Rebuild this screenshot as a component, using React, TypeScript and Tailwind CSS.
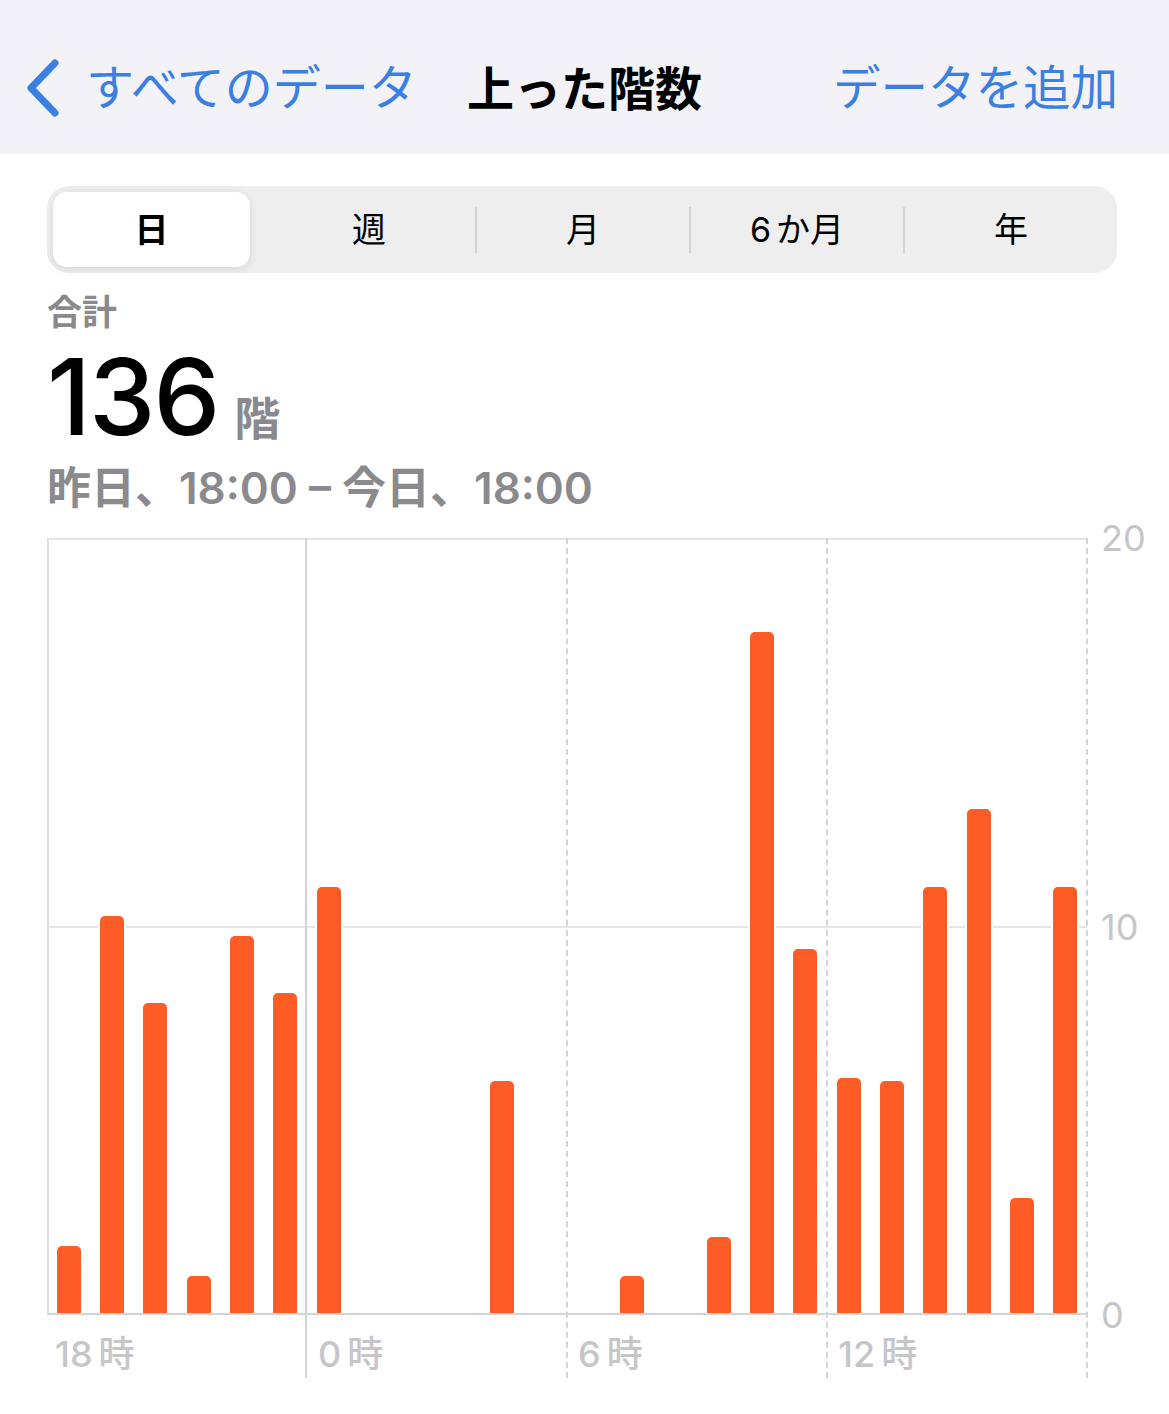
const hours = [67, 397, 310, 37, 377, 320, 426, 0, 0, 0, 232, 0, 0, 37, 0, 76, 681, 364, 235, 232, 426, 504, 115, 426];
const segments = ["日", "週", "月", "6か月", "年"];
const xLabels = ["18", "0", "6", "12"];

function Chevron() {
  return (
    <svg width="40" height="60" viewBox="0 0 40 60" className="shrink-0">
      <path d="M31 5 L7 30 L31 55" fill="none" stroke="#3b7fe1" strokeWidth="7" strokeLinecap="round" strokeLinejoin="round" />
    </svg>
  );
}

export default function App() {
  return (
    <div className="w-[1169px] min-h-[1414px] overflow-hidden bg-white font-[family-name:Inter,'Noto_Sans_CJK_JP',sans-serif]">
      <header className="grid h-[154px] grid-cols-[1fr_auto_1fr] items-center bg-[#f2f2f7] pt-[22px]">
        <div className="flex items-center gap-[22px] pl-[24px] text-[48px] leading-none text-[#3b7fe1]">
          <Chevron />
          <span>すべてのデータ</span>
        </div>
        <h1 className="text-[47px] font-bold leading-none text-black">上った階数</h1>
        <div className="flex justify-end pr-[51px] text-[47.5px] leading-none text-[#3b7fe1]">データを追加</div>
      </header>

      <main className="px-[47px]">
        <div className="mt-[32px] flex h-[87px] w-[1070px] items-center rounded-[22px] bg-[#eeeeef] py-[6px]">
          {segments.map((s, i) => (
            <div key={s} className="flex h-full flex-1 items-center">
              {i > 0 && <div className={`h-[46px] w-[2px] ${i > 1 ? "bg-[#d4d4d8]" : "bg-transparent"}`} />}
              {i === 0 ? (
                <div className="ml-[6px] mr-[11px] flex h-full flex-1 items-center justify-center rounded-[14px] bg-white text-[34px] font-semibold text-black shadow-[0_2px_8px_rgba(0,0,0,0.10)]">
                  {s}
                </div>
              ) : s === "6か月" ? (
                <div className="flex h-full flex-1 items-center justify-center text-[34px] text-black">
                  <span className="mr-[5px]">6</span>か月
                </div>
              ) : (
                <div className="flex h-full flex-1 items-center justify-center text-[34px] text-black">{s}</div>
              )}
            </div>
          ))}
        </div>

        <div className="mt-[22px] text-[35px] font-bold leading-none text-[#8a8a8e]">合計</div>
        <div className="mt-[14px] flex items-baseline gap-[16px]">
          <span className="text-[106px] font-medium leading-none tracking-[-2px] text-black">136</span>
          <span className="text-[46px] font-bold leading-none text-[#8a8a8e]">階</span>
        </div>
        <div className="mt-[16px] text-[44px] font-semibold leading-none text-[#8a8a8e]">昨日、18:00 – 今日、18:00</div>

        <div className="mt-[28px] flex">
          <div className="relative h-[840px] w-[1040px] shrink-0">
            {/* gridlines */}
            <div className="absolute left-0 right-0 top-0 h-[2px] bg-[#e6e6ea]" />
            <div className="absolute left-0 right-0 top-[388px] h-[2px] bg-[#e6e6ea]" />
            <div className="absolute left-0 top-0 h-[777px] w-[2px] bg-[#dedee2]" />
            <div className="absolute left-[258px] top-0 h-[840px] w-[2px] bg-[#d4d4d8]" />
            <div className="absolute left-[519px] top-0 h-[840px] border-l-2 border-dashed border-[#d4d4d8]" />
            <div className="absolute left-[779px] top-0 h-[840px] border-l-2 border-dashed border-[#d4d4d8]" />
            <div className="absolute left-[1039px] top-0 h-[840px] border-l-2 border-dashed border-[#d4d4d8]" />

            <div className="relative z-10 flex h-[777px] items-end border-b-2 border-[#d4d4d8]">
              {hours.map((h, i) => (
                <div key={i} className="flex h-full flex-1 items-end justify-center">
                  {h > 0 && (
                    <div
                      className="w-[24px] rounded-t-[5px] bg-[#fd5c27] shadow-[2px_0_0_0_#fff,-2px_0_0_0_#fff,0_-2px_0_0_#fff]"
                      style={{ height: `${h}px` }}
                    />
                  )}
                </div>
              ))}
            </div>
            <div className="grid grid-cols-4 pt-[21px] text-[36px] font-medium leading-none text-[#c6c6c9]">
              {xLabels.map((l, i) => (
                <div key={l} className={i === 0 ? "pl-[8px]" : "pl-[11px]"}>
                  {l}
                  <span className="ml-[6px]">時</span>
                </div>
              ))}
            </div>
          </div>

          <div className="relative h-[777px] w-[70px] shrink-0 text-[36px] leading-none text-[#c6c6c9]">
            <span className="absolute left-[14px] top-0 -translate-y-1/2">20</span>
            <span className="absolute left-[14px] top-[389px] -translate-y-1/2">10</span>
            <span className="absolute bottom-0 left-[14px] translate-y-1/2">0</span>
          </div>
        </div>
      </main>
    </div>
  );
}
